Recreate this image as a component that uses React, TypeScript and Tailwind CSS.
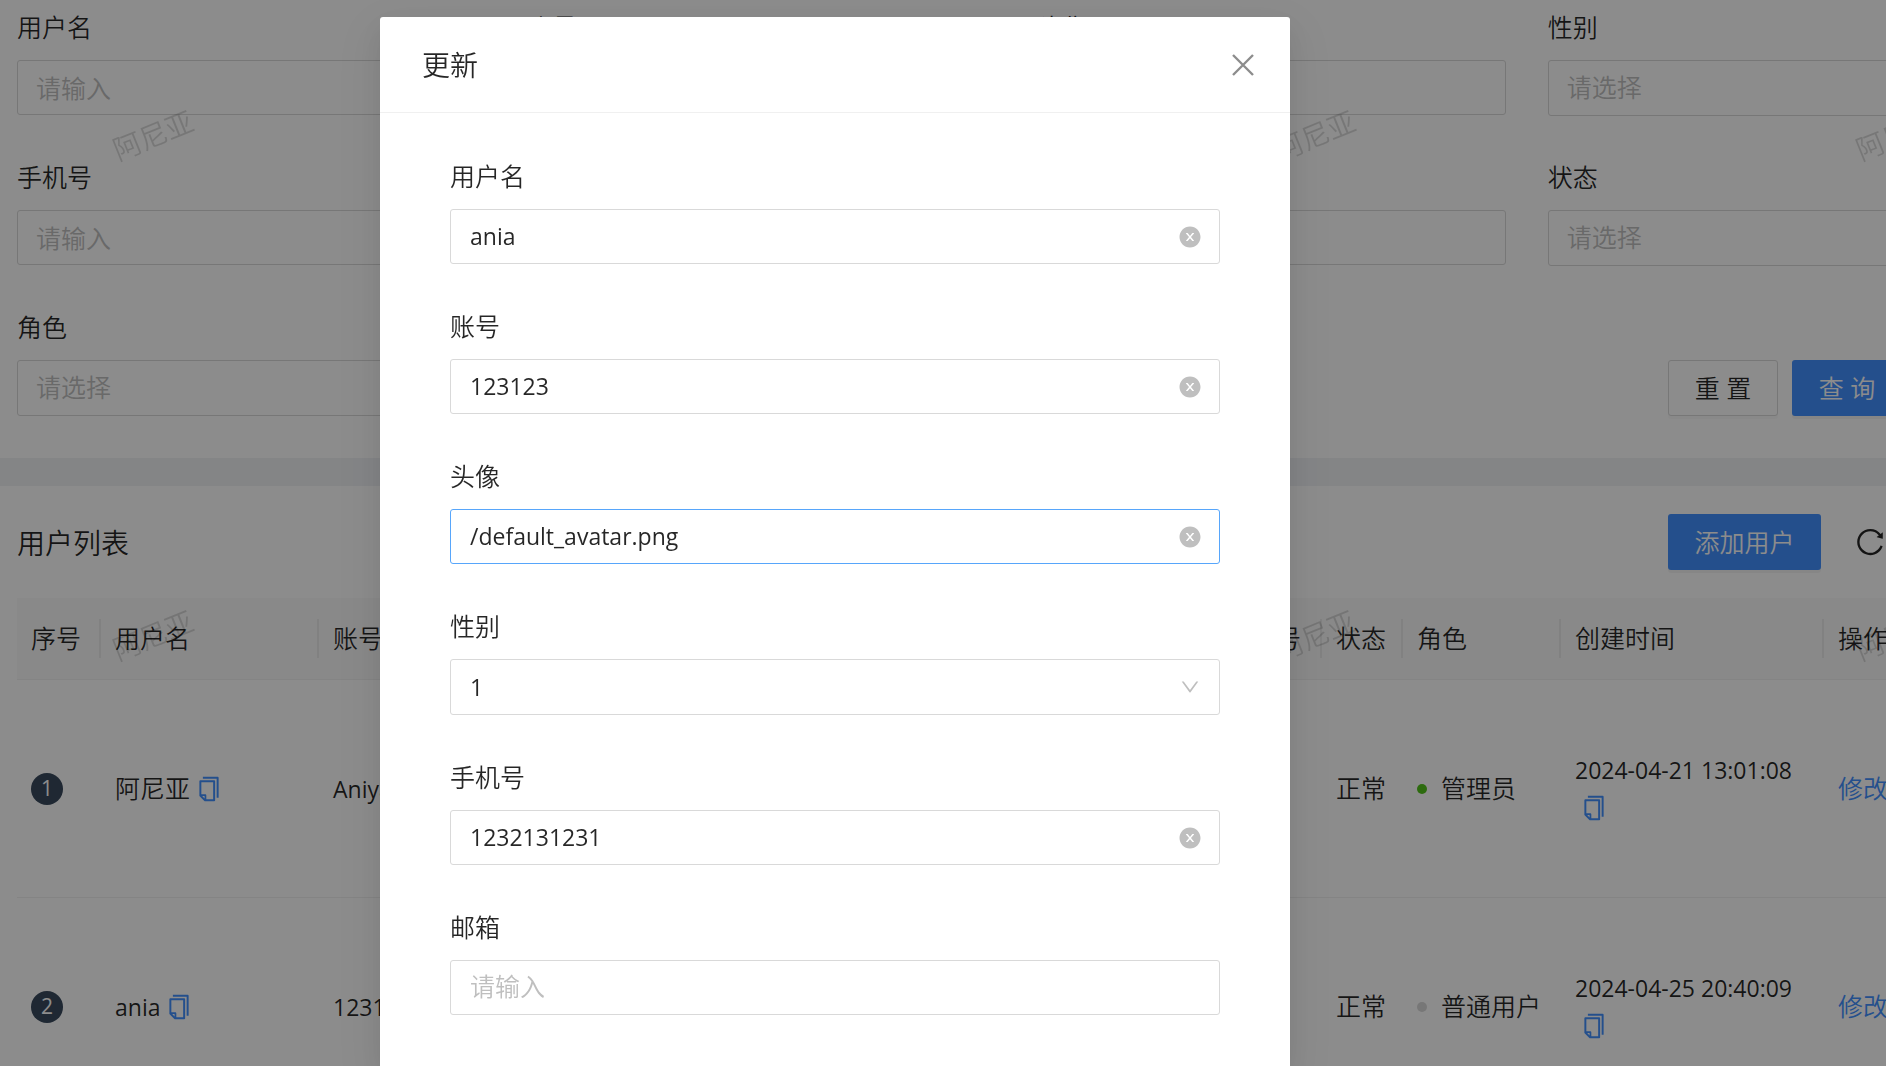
import { useState } from 'react';
import type { ReactNode } from 'react';
import { AiOutlineColumnHeight, AiOutlineCopy, AiOutlineReload, AiOutlineSetting } from 'react-icons/ai';

interface Field {
  name: string;
  label: string;
  type: 'input' | 'select';
}

interface User {
  index: number;
  username: string;
  account: string;
  status: string;
  role: string;
  isAdmin: boolean;
  createdAt: string;
}

const FILTERS: Field[] = [
  { name: 'username', label: '用户名', type: 'input' },
  { name: 'account', label: '账号', type: 'input' },
  { name: 'avatar', label: '头像', type: 'input' },
  { name: 'gender', label: '性别', type: 'select' },
  { name: 'phone', label: '手机号', type: 'input' },
  { name: 'email', label: '邮箱', type: 'input' },
  { name: 'profile', label: '简介', type: 'input' },
  { name: 'status', label: '状态', type: 'select' },
  { name: 'role', label: '角色', type: 'select' },
];

const FORM_FIELDS: Field[] = [
  { name: 'username', label: '用户名', type: 'input' },
  { name: 'account', label: '账号', type: 'input' },
  { name: 'avatar', label: '头像', type: 'input' },
  { name: 'gender', label: '性别', type: 'select' },
  { name: 'phone', label: '手机号', type: 'input' },
  { name: 'email', label: '邮箱', type: 'input' },
];

const USERS: User[] = [
  {
    index: 1,
    username: '阿尼亚',
    account: 'Aniya',
    status: '正常',
    role: '管理员',
    isAdmin: true,
    createdAt: '2024-04-21 13:01:08',
  },
  {
    index: 2,
    username: 'ania',
    account: '123123',
    status: '正常',
    role: '普通用户',
    isAdmin: false,
    createdAt: '2024-04-25 20:40:09',
  },
];

const HEADERS = ['序号', '用户名', '账号', '头像', '性别', '手机号', '状态', '角色', '创建时间', '操作'];

function CloseIcon() {
  return (
    <svg width="24" height="24" viewBox="0 0 24 24" fill="none" stroke="currentColor" strokeWidth="2.4">
      <path d="M2 2l20 20M22 2L2 22" />
    </svg>
  );
}

function ClearIcon() {
  return (
    <svg width="24" height="24" viewBox="0 0 1024 1024" fill="currentColor">
      <path d="M512 64C264.6 64 64 264.6 64 512s200.6 448 448 448 448-200.6 448-448S759.4 64 512 64zm165.4 618.2l-66-.3L512 563.4l-99.3 118.4-66.1.3c-4.4 0-8-3.5-8-8 0-1.9.7-3.7 1.9-5.2l130.1-155L340.5 359a8.32 8.32 0 0 1-1.9-5.2c0-4.4 3.6-8 8-8l66.1.3L512 464.6l99.3-118.4 66-.3c4.4 0 8 3.5 8 8 0 1.9-.7 3.7-1.9 5.2L553.5 514l130 155c1.2 1.5 1.9 3.3 1.9 5.2 0 4.4-3.6 8-8 8z" />
    </svg>
  );
}

function ArrowIcon() {
  return (
    <svg width="22" height="22" viewBox="0 0 1024 1024" fill="currentColor">
      <path d="M884 256h-75c-5.1 0-9.9 2.5-12.9 6.6L512 654.2 227.9 262.6c-3-4.1-7.8-6.6-12.9-6.6h-75c-6.5 0-10.3 7.4-6.5 12.7l352.6 486.1c12.8 17.6 39 17.6 51.7 0l352.6-486.1c3.9-5.3.1-12.7-6.4-12.7z" />
    </svg>
  );
}

function FormItem({ id, label, children }: { id: string; label: string; children: ReactNode }) {
  return (
    <div className="flex flex-col gap-[14px]">
      <label htmlFor={id} className="h-[39px] leading-[41px]">
        {label}
      </label>
      {children}
    </div>
  );
}

function FilterItem({ field }: { field: Field }) {
  const id = `filter-${field.name}`;
  return (
    <FormItem id={id} label={field.label}>
      {field.type === 'input' ? (
        <input
          id={id}
          placeholder="请输入"
          className="w-full h-[55px] px-[18px] rounded-[3px] border border-[#d9d9d9] bg-white placeholder:text-[#bfbfbf] outline-none"
        />
      ) : (
        <select
          id={id}
          defaultValue=""
          className="w-full h-14 px-[18px] rounded-[3px] border border-[#d9d9d9] bg-white text-[#bfbfbf] appearance-none outline-none"
        >
          <option value="">请选择</option>
        </select>
      )}
    </FormItem>
  );
}

function UpdateModal({ onClose }: { onClose: () => void }) {
  const [values, setValues] = useState<Record<string, string>>({
    username: 'ania',
    account: '123123',
    avatar: '/default_avatar.png',
    gender: '1',
    phone: '1232131231',
    email: '',
  });
  const [active, setActive] = useState('avatar');

  const setValue = (name: string, value: string) => setValues((prev) => ({ ...prev, [name]: value }));

  return (
    <div className="fixed inset-0 z-50 flex justify-center overflow-hidden bg-black/45 pt-[17px] pr-[216px]">
      <div
        role="dialog"
        aria-labelledby="modal-title"
        className="w-full max-w-[910px] rounded-t-[3px] bg-white shadow-[0_5px_10px_-7px_rgba(0,0,0,0.12),0_10px_28px_rgba(0,0,0,0.08),0_16px_49px_14px_rgba(0,0,0,0.05)]"
      >
        <div className="flex items-center justify-between h-24 pl-[42px] pr-[35px] border-b border-[#f0f0f0]">
          <h2 id="modal-title" className="h-[39px] text-[28px] leading-[41px]">
            更新
          </h2>
          <button type="button" aria-label="关闭" onClick={onClose} className="text-black/45">
            <CloseIcon />
          </button>
        </div>

        <form className="flex flex-col gap-[42px] px-[70px] py-[43px]">
          {FORM_FIELDS.map((field) => {
            const id = `form-${field.name}`;
            const value = values[field.name];

            return (
              <FormItem key={field.name} id={id} label={field.label}>
                {field.type === 'select' ? (
                  <div className="relative flex items-center h-14 rounded-[3px] border border-[#d9d9d9]">
                    <select
                      id={id}
                      value={value}
                      onChange={(e) => setValue(field.name, e.target.value)}
                      className="w-full h-full px-[19px] text-[23px] font-normal appearance-none bg-transparent outline-none"
                    >
                      <option value="0">0</option>
                      <option value="1">1</option>
                    </select>
                    <span className="absolute right-[18px] pointer-events-none text-[#bfbfbf]">
                      <ArrowIcon />
                    </span>
                  </div>
                ) : (
                  <div
                    className={`flex items-center h-[55px] pl-[19px] pr-[17px] rounded-[3px] border ${
                      active === field.name ? 'border-[#57a6fb]' : 'border-[#d9d9d9]'
                    }`}
                  >
                    <input
                      id={id}
                      value={value}
                      placeholder="请输入"
                      onFocus={() => setActive(field.name)}
                      onChange={(e) => setValue(field.name, e.target.value)}
                      className="flex-1 min-w-0 text-[23px] font-normal placeholder:text-[25px] placeholder:font-[350] placeholder:text-[#bfbfbf] outline-none"
                    />
                    {value && (
                      <button
                        type="button"
                        aria-label="清除"
                        onClick={() => setValue(field.name, '')}
                        className="text-[#bfbfbf]"
                      >
                        <ClearIcon />
                      </button>
                    )}
                  </div>
                )}
              </FormItem>
            );
          })}
        </form>
      </div>
    </div>
  );
}

function CopyButton() {
  return (
    <button type="button" aria-label="复制" className="align-middle text-[#4391ff]">
      <AiOutlineCopy size={28} />
    </button>
  );
}

function UserTable() {
  return (
    <table className="w-full table-fixed text-left">
      <colgroup>
        <col className="w-[84px]" />
        <col className="w-[218px]" />
        <col className="w-[281px]" />
        <col />
        <col className="w-[300px]" />
        <col className="w-[110px]" />
        <col className="w-[81px]" />
        <col className="w-[158px]" />
        <col className="w-[263px]" />
        <col className="w-[192px]" />
      </colgroup>
      <thead>
        <tr className="h-[81px] bg-[#fafafa] border-b border-[#f0f0f0]">
          {HEADERS.map((header, i) => (
            <th key={header} className="p-0 pl-[14px] font-[350]">
              <div className="flex items-center justify-between whitespace-nowrap">
                {header}
                {i < HEADERS.length - 1 && <span className="w-0.5 h-[39px] bg-black/6" />}
              </div>
            </th>
          ))}
        </tr>
      </thead>
      <tbody>
        {USERS.map((user) => (
          <tr key={user.index} className="h-[218px] border-b border-[#f0f0f0] [&>td]:pt-0.5">
            <td className="pl-[14px]">
              <span className="flex items-center justify-center w-8 h-8 rounded-full bg-[#394a5e] text-[21px] font-normal text-white">
                {user.index}
              </span>
            </td>
            <td className="pl-[14px]">
              <div className="flex items-center gap-[5px]">
                <span className={user.index === 1 ? 'text-[25px]' : 'text-[23px] font-normal'}>{user.username}</span>
                <CopyButton />
              </div>
            </td>
            <td className="pl-[14px] text-[23px] font-normal">{user.account}</td>
            <td />
            <td />
            <td />
            <td className="pl-[14px] whitespace-nowrap">{user.status}</td>
            <td className="pl-[14px]">
              <div className="flex items-center gap-[14px] whitespace-nowrap">
                <span className={`w-[10px] h-[10px] rounded-full ${user.isAdmin ? 'bg-[#52c41a]' : 'bg-[#d9d9d9]'}`} />
                {user.role}
              </div>
            </td>
            <td className="pl-[14px] text-[23px] font-normal leading-[38px]">
              <div className="whitespace-nowrap">{user.createdAt}</div>
              <div className="flex items-center h-[38px] pl-[5px]">
                <CopyButton />
              </div>
            </td>
            <td className="pl-[14px]">
              <div className="flex gap-7 whitespace-nowrap text-[#4391ff]">
                <a href="#edit">修改</a>
                <a href="#delete">删除</a>
              </div>
            </td>
          </tr>
        ))}
      </tbody>
    </table>
  );
}

// Repeating tilted stamp laid over the whole page
function Watermark() {
  return (
    <svg className="absolute inset-0 w-full h-full pointer-events-none" aria-hidden="true">
      <defs>
        <pattern id="watermark" width="581" height="500" patternUnits="userSpaceOnUse">
          <text
            x="153"
            y="135"
            fontSize="28"
            fill="rgba(0,0,0,0.15)"
            textAnchor="middle"
            dominantBaseline="central"
            transform="rotate(-22 153 135)"
          >
            阿尼亚
          </text>
        </pattern>
      </defs>
      <rect width="100%" height="100%" fill="url(#watermark)" />
    </svg>
  );
}

export default function App() {
  const [open, setOpen] = useState(true);

  return (
    <div className="relative h-screen overflow-hidden bg-[#f0f2f5] font-['Open_Sans','Noto_Sans_CJK_SC',sans-serif] text-[25px] font-[350] text-black/85">
      {/* the content is wider than the viewport, the rest is clipped */}
      <div className="-mr-[147px]">
        <form className="grid grid-cols-4 gap-x-[42px] gap-y-[41px] px-[17px] pt-[7px] pb-[42px] bg-white">
          {FILTERS.map((field) => (
            <FilterItem key={field.name} field={field} />
          ))}
          <div className="col-start-4 self-end flex items-center justify-end gap-[14px]">
            <button
              type="reset"
              className="w-[110px] h-14 pt-0.5 rounded-[3px] border border-[#d9d9d9] bg-white shadow-[0_3px_0_rgba(0,0,0,0.02)]"
            >
              重 置
            </button>
            <button
              type="button"
              className="w-[110px] h-14 pt-0.5 rounded-[3px] bg-[#4391ff] text-white shadow-[0_3px_0_rgba(0,0,0,0.04)]"
            >
              查 询
            </button>
            <a href="#collapse" className="w-[100px] text-[#4391ff]">
              收起
            </a>
          </div>
        </form>

        <section className="mt-7 px-[17px] bg-white">
          <div className="flex items-center justify-between py-7">
            <h1 className="h-[39px] text-[28px] leading-[41px]">用户列表</h1>
            <div className="flex items-center gap-[33px]">
              <button
                type="button"
                onClick={() => setOpen(true)}
                className="w-[153px] h-14 pt-0.5 rounded-[3px] bg-[#4391ff] text-white shadow-[0_3px_0_rgba(0,0,0,0.04)]"
              >
                添加用户
              </button>
              <button type="button" aria-label="刷新">
                <AiOutlineReload size={32} />
              </button>
              <button type="button" aria-label="密度">
                <AiOutlineColumnHeight size={32} />
              </button>
              <button type="button" aria-label="列设置">
                <AiOutlineSetting size={32} />
              </button>
            </div>
          </div>
          <UserTable />
        </section>
      </div>

      <Watermark />
      {open && <UpdateModal onClose={() => setOpen(false)} />}
    </div>
  );
}
